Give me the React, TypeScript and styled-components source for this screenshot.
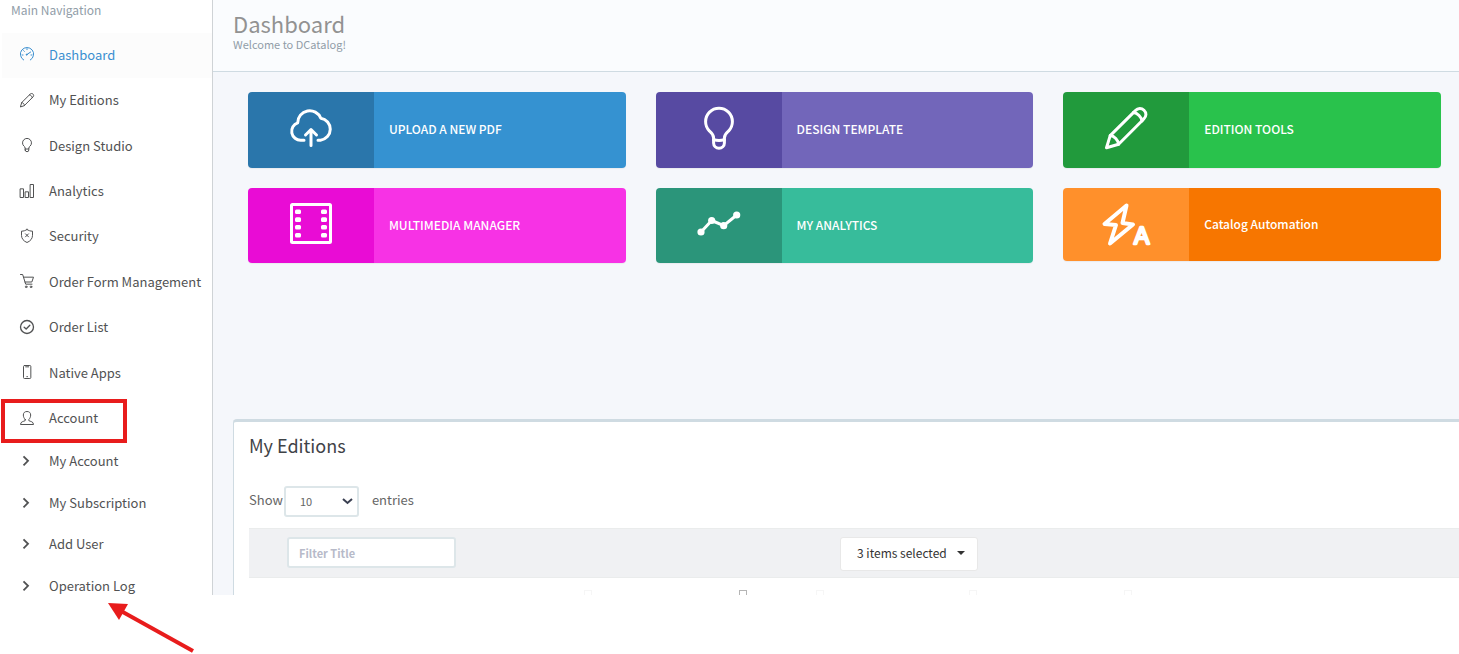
import React from "react";
import styled, { createGlobalStyle } from "styled-components";

const GlobalStyle = createGlobalStyle`
  *, *::before, *::after { box-sizing: border-box; }
  body {
    margin: 0;
    background: #fff;
    color: #515253;
    font-family: "Noto Sans CJK SC", "Noto Sans", sans-serif;
    font-size: 13px;
    line-height: 20px;
  }
  h1, h2, p, ul { margin: 0; padding: 0; font-weight: 400; }
  ul { list-style: none; }
  a { color: inherit; text-decoration: none; }
  button, input, select { font: inherit; color: inherit; }
`;

const Shell = styled.div`
  display: flex;
  height: calc(100vh - 59px);
  overflow: hidden;
`;

const Sidebar = styled.nav`
  flex: 0 0 213px;
  border-right: 1px solid #cfd3d6;
  background: #fff;
`;

const NavHeading = styled.p`
  height: 33px;
  padding-left: 11px;
  color: #919da8;
  font-size: 12px;
`;

const NavList = styled.ul`
  display: grid;
  grid-auto-rows: 1fr;
  height: 409px;
  padding-left: 2px;
`;

const SubList = styled.ul`
  display: grid;
  grid-auto-rows: 1fr;
  height: 167px;
  padding-left: 2px;
`;

const NavItem = styled.li`
  position: relative;
  display: grid;
`;

const NavLink = styled.a<{ $active?: boolean }>`
  display: flex;
  align-items: center;
  gap: 15px;
  padding: 0 0 2px 18px;
  white-space: nowrap;
  color: ${(p) => (p.$active ? "#3a8fd0" : "#515253")};
  background: ${(p) => (p.$active ? "#fcfcfc" : "transparent")};
`;

const SubLink = styled(NavLink)`
  gap: 13px;
  padding: 0 0 4px 20px;
`;

const Highlight = styled.span`
  position: absolute;
  left: -1px;
  top: 2px;
  width: 126px;
  height: 44px;
  border: 4px solid #e81c1c;
  pointer-events: none;
`;

const Icon = styled.svg<{ $size: number }>`
  flex: none;
  width: ${(p) => p.$size}px;
  height: ${(p) => p.$size}px;
  overflow: visible;
  fill: none;
  stroke: currentColor;
  stroke-width: 3;
  stroke-linecap: round;
  stroke-linejoin: round;
`;

const NavIcon = styled(Icon)`
  margin-bottom: 1px;
`;

const Main = styled.main`
  flex: 1;
  min-width: 0;
  background: #f5f7fb;
`;

const PageHeader = styled.header`
  height: 72px;
  padding: 10px 20px 0;
  border-bottom: 1px solid #cfdbe2;
  background: #fafcfe;
`;

const PageTitle = styled.h1`
  color: #929292;
  font-size: 22px;
  line-height: 26px;
`;

const PageSubtitle = styled.p`
  color: #919da8;
  font-size: 11px;
  line-height: 16px;
`;

const Tiles = styled.section`
  display: grid;
  grid-template-columns: repeat(3, 1fr);
  align-items: start;
  gap: 20px 30px;
  min-height: 347px;
  align-content: start;
  padding: 20px 18px 0 35px;
`;

const Tile = styled.a<{ $dark: string; $light: string; $height: number }>`
  display: grid;
  grid-template-columns: 1fr 2fr;
  height: ${(p) => p.$height}px;
  overflow: hidden;
  border-radius: 4px;
  color: #fff;
  background: linear-gradient(to right, ${(p) => p.$dark} 33.33%, ${(p) => p.$light} 33.33%);
  box-shadow: 0 1px 1px rgba(0, 0, 0, 0.05);
`;

const TileIcon = styled.span`
  display: flex;
  justify-content: center;
  align-items: flex-start;
  padding-top: 15px;
`;

const TileLabel = styled.span`
  display: flex;
  align-items: center;
  padding: 0 0 2px 15px;
  font-size: 12px;
  font-weight: 500;
`;

const Panel = styled.section`
  margin-left: 20px;
  min-height: 300px;
  padding: 13px 0 0 15px;
  border-top: 3px solid #cfdbe2;
  border-left: 1px solid #cfdbe2;
  border-top-left-radius: 4px;
  background: #fff;
`;

const PanelTitle = styled.h2`
  color: #3f4347;
  font-size: 18px;
  line-height: 20px;
`;

const LengthLabel = styled.label`
  display: flex;
  align-items: center;
  height: 31px;
  margin: 31px 0 11px;
  color: #656565;
`;

const LengthText = styled.span`
  padding-bottom: 4px;
`;

const SelectWrap = styled.span`
  display: grid;
  align-items: center;
  width: 75px;
  height: 31px;
  margin: 0 13px 0 1px;
  border: 2px solid #dde6e9;
  border-radius: 3px;
  background: #fff;
  > * { grid-area: 1 / 1; }
`;

const LengthSelect = styled.select`
  width: 100%;
  height: 27px;
  padding: 0 0 2px 14px;
  border: 0;
  appearance: none;
  background: transparent;
  font-size: 11px;
`;

const SelectArrow = styled.svg`
  justify-self: end;
  width: 11px;
  height: 7px;
  margin-right: 4px;
  fill: none;
  stroke: #3a3f51;
  stroke-width: 2;
  pointer-events: none;
`;

const Grid = styled.table`
  width: 100%;
  table-layout: fixed;
  border-collapse: collapse;
`;

const FilterRow = styled.tr`
  height: 49px;
  border-top: 1px solid #eaecec;
  border-bottom: 1px solid #eaecec;
  background: #f0f1f3;
`;

const Cell = styled.th`
  padding: 0 8px;
  font-weight: 400;
  text-align: left;
  vertical-align: middle;
`;

const FilterCell = styled(Cell)`
  padding-top: 8px;
  vertical-align: top;
`;

const SortCell = styled(Cell)`
  height: 32px;
  padding-top: 12px;
  text-align: right;
`;

const SortMark = styled.span<{ $strong?: boolean }>`
  display: inline-block;
  width: 8px;
  height: 10px;
  border: 1px solid ${(p) => (p.$strong ? "#b5b5b5" : "#f6f6f6")};
  vertical-align: top;
`;

const FilterInput = styled.input`
  display: block;
  width: 169px;
  height: 31px;
  padding: 0 10px;
  border: 2px solid #dde6e9;
  border-radius: 3px;
  background: #fff;
  font-size: 11px;
  font-weight: 700;
  &::placeholder { color: #b7bac9; opacity: 1; }
`;

const Dropdown = styled.button`
  display: flex;
  align-items: center;
  justify-content: space-between;
  width: 138px;
  height: 34px;
  padding: 0 12px 2px 16px;
  border: 1px solid #e8e8e8;
  border-radius: 3px;
  background: #fff;
  color: #333;
  font-size: 12px;
  white-space: nowrap;
`;

const Caret = styled.span`
  border-top: 4px solid #333;
  border-left: 4px solid transparent;
  border-right: 4px solid transparent;
`;

const Below = styled.div`
  height: 59px;
  padding: 7px 0 0 107px;
`;

const Pointer = styled.svg`
  display: block;
  width: 88px;
  height: 52px;
`;

const Bulb = () => (
  <>
    <path d="M15.6 36V31C15.6 27.5 13.5 25.8 11.5 24.1A13.4 13.4 0 1 1 30.5 24.1C28.5 25.8 26.4 27.5 26.4 31V36A5.4 5.2 0 0 1 15.6 36Z" />
    <path d="M15.6 32.6Q21 34.4 26.4 32.6" />
  </>
);

const Pencil = () => (
  <>
    <path d="M1.5 40.8L5.2 28.6L30.4 3.6C33 .8 36.5 .8 39 3.3C41.6 5.8 41.6 9.2 38.8 12L13.6 37.2Z" />
    <path d="M28.5 5.5C32.5 6 36.5 10 37 14M5.2 28.6C9.5 29 13 33 13.6 37.2" />
  </>
);

const navItems = [
  {
    label: "Dashboard",
    active: true,
    icon: (
      <>
        <path d="M11 39A20 20 0 1 1 31 39M20 23L32 15M6 24H9M11 11L13 13M21 5V8M33 24H36" />
        <circle cx="20" cy="23" r="1.5" />
      </>
    ),
  },
  { label: "My Editions", icon: <Pencil /> },
  { label: "Design Studio", icon: <Bulb /> },
  {
    label: "Analytics",
    icon: (
      <>
        <rect x="1.5" y="14.5" width="9" height="26" />
        <rect x="16.5" y="23.5" width="9" height="17" />
        <rect x="31.5" y="1.5" width="9" height="39" />
      </>
    ),
  },
  {
    label: "Security",
    icon: (
      <>
        <path d="M21 1.5C16 5 10.5 6.5 4.5 6.5V19C4.5 29 11 36.5 21 40.5C31 36.5 37.5 29 37.5 19V6.5C31.5 6.5 26 5 21 1.5Z" />
        <path d="M16.5 14.5L25.5 23.5M25.5 14.5L16.5 23.5" />
      </>
    ),
  },
  {
    label: "Order Form Management",
    icon: (
      <>
        <path d="M1.5 1.5H8L17 30.5H36M10.5 9.5H40.5L35.5 24H15" />
        <circle cx="18.5" cy="38.5" r="2.5" />
        <circle cx="33" cy="38.5" r="2.5" />
      </>
    ),
  },
  {
    label: "Order List",
    icon: (
      <>
        <circle cx="21" cy="21" r="19.5" strokeWidth="4" />
        <path d="M12.5 21.5L18.5 27L29.5 15.5" strokeWidth="4" />
      </>
    ),
  },
  {
    label: "Native Apps",
    icon: (
      <>
        <rect x="10.5" y="1.5" width="22" height="39" rx="3" />
        <path d="M17 5.5H26M20.5 35H22.5" />
      </>
    ),
  },
  {
    label: "Account",
    marked: true,
    icon: (
      <path d="M15.5 25.5V29C11 31.5 1.5 31.5 1.5 40.5H40.5C40.5 31.5 31 31.5 26.5 29V25.5C30 22 32 17 32 12C32 5 27.5 1.5 21 1.5C14.5 1.5 10 5 10 12C10 17 12 22 15.5 25.5Z" />
    ),
  },
];

const subItems = ["My Account", "My Subscription", "Add User", "Operation Log"];

const tiles = [
  {
    label: "UPLOAD A NEW PDF",
    dark: "#2a76ab",
    light: "#3592d1",
    height: 76,
    icon: (
      <>
        <path d="M14 33.2H11A8.95 8.95 0 0 1 7.7 15.8A12 12 0 0 1 30.8 11.2A11.1 11.1 0 0 1 30.5 33.2H28" />
        <path d="M21 38.5V22.5M15.5 28L21 22.5L26.5 28" />
      </>
    ),
  },
  { label: "DESIGN TEMPLATE", dark: "#574aa2", light: "#7266ba", height: 76, icon: <Bulb /> },
  { label: "EDITION TOOLS", dark: "#219a3c", light: "#29c24c", height: 76, icon: <Pencil /> },
  {
    label: "MULTIMEDIA MANAGER",
    dark: "#e90cd5",
    light: "#f732e5",
    height: 75,
    icon: (
      <>
        <rect x="1.5" y="1.5" width="39" height="38" rx="1" />
        {[6.5, 14.3, 22, 30].map((y) => (
          <g key={y} fill="currentColor" stroke="none">
            <rect x="5" y={y} width="6" height="4.6" rx="1.5" />
            <rect x="31" y={y} width="6" height="4.6" rx="1.5" />
          </g>
        ))}
      </>
    ),
  },
  {
    label: "MY ANALYTICS",
    dark: "#2b957a",
    light: "#37bc9b",
    height: 75,
    icon: (
      <>
        <path d="M3 29L13.7 17.5L25.7 22.7L38.7 12" />
        <g fill="currentColor" stroke="none">
          <circle cx="3" cy="29" r="3.6" />
          <circle cx="13.7" cy="17.5" r="3.6" />
          <circle cx="25.7" cy="22.7" r="3.6" />
          <circle cx="38.7" cy="12" r="3.6" />
        </g>
      </>
    ),
  },
  {
    label: "Catalog Automation",
    dark: "#ff902b",
    light: "#f77600",
    height: 73,
    icon: (
      <>
        <path d="M21.5 2.5L-.5 21L11 22L5 40.5L28 21.5L17.5 20Z" strokeWidth="4" />
        <text
          x="29"
          y="41"
          fill="currentColor"
          strokeWidth="2.4"
          fontFamily="Liberation Sans, sans-serif"
          fontSize="23"
        >
          A
        </text>
      </>
    ),
  },
];

export default function App() {
  return (
    <>
      <GlobalStyle />
      <Shell>
        <Sidebar>
          <NavHeading>Main Navigation</NavHeading>
          <NavList>
            {navItems.map((item) => (
              <NavItem key={item.label}>
                <NavLink href="#" $active={item.active}>
                  <NavIcon $size={14} viewBox="0 0 42 42" aria-hidden="true">
                    {item.icon}
                  </NavIcon>
                  {item.label}
                </NavLink>
                {item.marked && <Highlight />}
              </NavItem>
            ))}
          </NavList>
          <SubList>
            {subItems.map((label) => (
              <NavItem key={label}>
                <SubLink href="#">
                  <Icon $size={14} viewBox="0 0 42 42" aria-hidden="true">
                    <path d="M4.5 7L18 20.5L4.5 34" strokeWidth="5.5" strokeLinecap="butt" strokeLinejoin="miter" />
                  </Icon>
                  {label}
                </SubLink>
              </NavItem>
            ))}
          </SubList>
        </Sidebar>
        <Main>
          <PageHeader>
            <PageTitle>Dashboard</PageTitle>
            <PageSubtitle>Welcome to DCatalog!</PageSubtitle>
          </PageHeader>
          <Tiles>
            {tiles.map((tile) => (
              <Tile key={tile.label} href="#" $dark={tile.dark} $light={tile.light} $height={tile.height}>
                <TileIcon>
                  <Icon $size={42} viewBox="0 0 42 42" aria-hidden="true">
                    {tile.icon}
                  </Icon>
                </TileIcon>
                <TileLabel>{tile.label}</TileLabel>
              </Tile>
            ))}
          </Tiles>
          <Panel>
            <PanelTitle>My Editions</PanelTitle>
            <LengthLabel>
              <LengthText>Show</LengthText>
              <SelectWrap>
                <LengthSelect defaultValue="10">
                  <option>10</option>
                  <option>25</option>
                  <option>50</option>
                </LengthSelect>
                <SelectArrow viewBox="0 0 11 7" aria-hidden="true">
                  <path d="M1 1L5.5 5L10 1" />
                </SelectArrow>
              </SelectWrap>
              <LengthText>entries</LengthText>
            </LengthLabel>
            <Grid>
              <colgroup>
                <col width="30" />
                <col width="321" />
                <col width="155" />
                <col width="77" />
                <col width="153" />
                <col width="155" />
                <col />
              </colgroup>
              <thead>
                <FilterRow>
                  <Cell />
                  <FilterCell>
                    <FilterInput type="text" placeholder="Filter Title" aria-label="Filter Title" />
                  </FilterCell>
                  <Cell />
                  <Cell />
                  <FilterCell colSpan={3}>
                    <Dropdown type="button">
                      3 items selected
                      <Caret />
                    </Dropdown>
                  </FilterCell>
                </FilterRow>
                <tr>
                  <SortCell />
                  <SortCell><SortMark /></SortCell>
                  <SortCell><SortMark $strong /></SortCell>
                  <SortCell><SortMark /></SortCell>
                  <SortCell><SortMark /></SortCell>
                  <SortCell><SortMark /></SortCell>
                  <SortCell />
                </tr>
              </thead>
            </Grid>
          </Panel>
        </Main>
      </Shell>
      <Below>
        <Pointer viewBox="0 0 88 52" aria-hidden="true">
          <path d="M86 49L14 9" stroke="#e81c1c" strokeWidth="4" />
          <path d="M1 1L21 2L12 18Z" fill="#e81c1c" />
        </Pointer>
      </Below>
    </>
  );
}
